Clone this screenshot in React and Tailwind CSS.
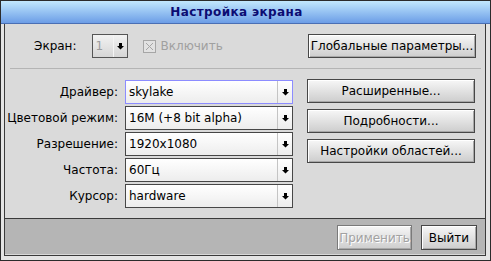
import React from 'react';

const Arrow = () => (
  <svg width="7" height="7" viewBox="0 0 7 7" className="block">
    <path d="M2 0h3v3h2L3.5 6.5 0 3h2z" fill="#000" />
  </svg>
);

const Button = ({ children, disabled = false, className = '' }) => (
  <div
    className={`flex items-center justify-center whitespace-nowrap border bg-gradient-to-b from-[#f7f7f7] to-[#cdcdcd] shadow-[inset_1px_1px_0_#ffffff,inset_-1px_-1px_0_#a8a8a8] ${
      disabled ? 'border-[#7a7a7a] text-[#a2a2a2] [text-shadow:1px_1px_0_#ffffff]' : 'border-[#474747] text-black'
    } ${className}`}
  >
    {children}
  </div>
);

const Combo = ({ value, focused = false }) => (
  <div
    className={`flex h-[24px] w-[168px] border bg-gradient-to-b from-white to-[#ededed] ${
      focused ? 'border-[#8c8cff]' : 'border-[#474747]'
    }`}
  >
    <div className="flex flex-1 items-center whitespace-nowrap pl-[3px] text-black">{value}</div>
    <div className="flex w-[15px] items-center justify-center border-l border-[#c4c4c4]">
      <Arrow />
    </div>
  </div>
);

const rows = [
  ['Драйвер:', 'skylake', true],
  ['Цветовой режим:', '16M (+8 bit alpha)', false],
  ['Разрешение:', '1920x1080', false],
  ['Частота:', '60Гц', false],
  ['Курсор:', 'hardware', false],
];

export default function App() {
  return (
    <div className="flex h-[261px] w-[491px] flex-col border border-[#2b2b2b] bg-[#e4e4e4] font-['DejaVu_Sans',sans-serif] text-[12px] leading-none">
      {/* Title */}
      <div className="flex h-[23px] shrink-0 items-center justify-center border-b border-[#4a6fb4] bg-gradient-to-b from-[#c2e8fd] to-[#6c9de6] pr-[18px]">
        <span className="text-[12px] font-bold tracking-[0.4px] text-[#0c0c72]">Настройка экрана</span>
      </div>

      {/* Frame */}
      <div className="flex flex-1 flex-col pb-[4px] pl-[3px] pr-[4px]">
        <div className="flex flex-1 flex-col border-x border-b border-[#3a3a3a]">
          {/* Content */}
          <div className="flex flex-1 flex-col bg-[#dadada] pt-[10px]">
            <div className="flex h-[24px] items-center">
              <span className="ml-[29px] text-black">Экран:</span>
              <div className="ml-[15px] flex h-[24px] w-[36px] border border-[#555555] bg-gradient-to-b from-[#f2f2f2] to-[#d6d6d6]">
                <div className="flex flex-1 items-center pl-[3px] text-[#9c9c9c]">1</div>
                <div className="flex w-[14px] items-center justify-center border-l border-[#f4f4f4]">
                  <Arrow />
                </div>
              </div>
              <svg width="13" height="13" viewBox="0 0 13 13" className="ml-[15px] block">
                <rect x="0.5" y="0.5" width="12" height="12" fill="#e2e2e2" stroke="#a6a6a6" />
                <path d="M3 3l7 7M10 3l-7 7" stroke="#a6a6a6" strokeWidth="1" />
              </svg>
              <span className="ml-[5px] text-[#a0a0a0]">Включить</span>
              <Button className="ml-auto mr-[9px] h-[24px] w-[168px]">Глобальные параметры...</Button>
            </div>

            <div className="ml-[5px] mr-[4px] mt-[10px] h-px bg-[#b4b4b4]" />

            <div className="mt-[10px] flex">
              <div className="flex flex-col gap-[2px] pt-px">
                {rows.map(([label, value, focused]) => (
                  <div key={label} className="flex items-center">
                    <div className="flex w-[113px] justify-end whitespace-nowrap text-black">{label}</div>
                    <div className="ml-[7px]">
                      <Combo value={value} focused={focused} />
                    </div>
                  </div>
                ))}
              </div>
              <div className="ml-[14px] flex flex-col gap-[6px]">
                <Button className="h-[24px] w-[168px]">Расширенные...</Button>
                <Button className="h-[24px] w-[168px]">Подробности...</Button>
                <Button className="h-[24px] w-[168px]">Настройки областей...</Button>
              </div>
            </div>
          </div>

          {/* Bottom bar */}
          <div className="flex h-[37px] shrink-0 items-start justify-end gap-[9px] border-y border-t-[#3a3a3a] border-b-[#d8d8d8] bg-[#b5b5b5] pr-[8px] pt-[6px]">
            <Button disabled className="h-[25px] w-[75px]">Применить</Button>
            <Button className="h-[25px] w-[56px]">Выйти</Button>
          </div>
        </div>
      </div>
    </div>
  );
}
